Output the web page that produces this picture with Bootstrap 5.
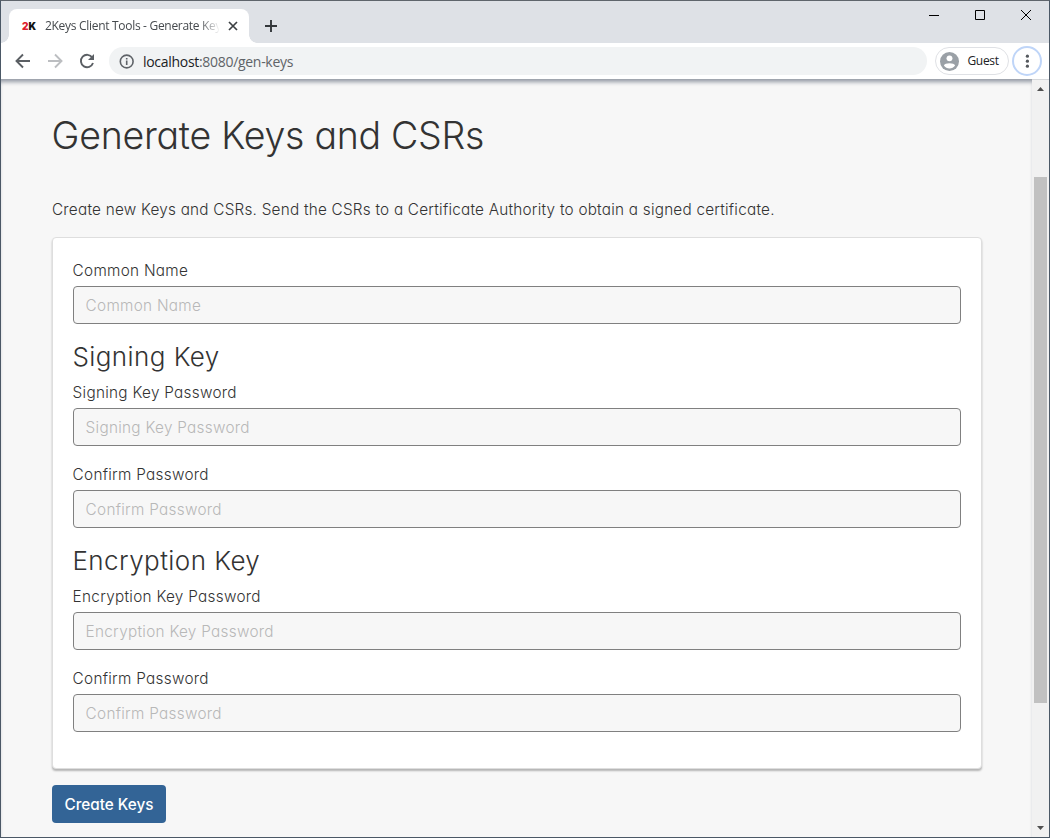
<!DOCTYPE html>
<html lang="en">
<head>
<meta charset="utf-8">
<title>2Keys Client Tools - Generate Keys</title>
<link href="https://cdn.jsdelivr.net/npm/bootstrap@5.3.0/dist/css/bootstrap.min.css" rel="stylesheet">
<style>
  body { background: #f7f7f7; color: #333; overflow: hidden; }
  .window { width: 1050px; height: 838px; border: 1px solid #4b5866; border-top-color: #5f656c; font-family: "Open Sans", sans-serif; }
  .tabstrip { height: 42px; background: #dee1e6; }
  .tab { position: relative; width: 240px; height: 34px; margin: 8px 0 0 8px; padding: 0 10px 0 13px; background: #fff; border-radius: 8px 8px 0 0; }
  .tab::before, .tab::after { content: ""; position: absolute; bottom: 0; width: 8px; height: 8px; }
  .tab::before { left: -8px; background: radial-gradient(circle at 0 0, transparent 7.5px, #fff 8px); }
  .tab::after { right: -8px; background: radial-gradient(circle at 100% 0, transparent 7.5px, #fff 8px); }
  .favicon { width: 15px; margin-right: 8px; font: 900 10px/12px Inter, sans-serif; letter-spacing: -.1px; color: #111; white-space: nowrap; }
  .favicon b { color: #e0202c; font-weight: 900; }
  .tab-title { width: 174px; font-size: 12px; line-height: 16px; letter-spacing: -.3px; color: #45494d; white-space: nowrap; overflow: hidden; -webkit-mask-image: linear-gradient(90deg, #000 154px, transparent 175px); mask-image: linear-gradient(90deg, #000 154px, transparent 175px); }
  .new-tab { margin: 18px 0 0 15px; }
  .toolbar { height: 36px; background: #fff; }
  .omnibox { width: 818px; height: 28px; margin-left: 12px; padding-left: 10px; border-radius: 14px; background: #f1f3f4; font-size: 14px; letter-spacing: -.3px; color: #5f6368; }
  .omnibox svg { margin-right: 9px; }
  .omnibox span { color: #202124; }
  .profile { width: 74px; height: 28px; margin-left: 8px; padding-left: 3.500px; border: 1px solid #dfe1e5; border-radius: 14px; font-size: 12px; letter-spacing: -.35px; color: #202124; }
  .profile svg { margin-right: 9px; }
  .menu-dot { width: 30px; height: 30px; margin-left: 3px; border: 2px solid #bfd5f8; border-radius: 50%; }
  .page { width: 1031px; padding: 32px 50px 0 51px; font-family: Inter, sans-serif; font-feature-settings: "cv11"; font-weight: 300; border-top: 1px solid #a0a5ae; box-shadow: inset 0 4px 4px -2px #9399a4; background: #f7f7f7; }
  .page h1 { font-size: 37.5px; line-height: 48px; font-weight: 300; margin: 0 0 38px -.4px; letter-spacing: -.27px; }
  .page p { font-size: 15.3px; line-height: 24px; margin-bottom: 15px; letter-spacing: .23px; }
  .key-card { height: 532px; padding: 21px 20px 20px; background: #fff; border: 1px solid #dedede; border-radius: 4px; box-shadow: 0 2px 2px rgba(0,0,0,.27); }
  .key-card h3 { font-size: 26px; line-height: 34px; font-weight: 300; margin: 0 0 7px -.6px; letter-spacing: .43px; }
  .key-card label { display: block; font-size: 15.3px; line-height: 24px; margin: 0 0 3px -.4px; letter-spacing: .29px; }
  .key-card .form-control { height: 38px; margin-bottom: 16px; padding: 6px 11.6px; background: #f7f7f7; border: 1px solid #808080; border-radius: 4px; font-size: 15.3px; font-weight: 300; letter-spacing: .29px; font-feature-settings: "cv11"; }
  .key-card .form-control + label { margin-top: 17px; }
  .key-card .form-control:has(+ label) { margin-bottom: 0; }
  .key-card .form-control::placeholder { color: #b8b8b8; }
  .create-btn { width: 114px; height: 38px; margin-top: 16px; padding: 2px 0 0; background: #336496; border: 0; border-radius: 4px; color: #fff; font-size: 15.3px; font-weight: 500; font-feature-settings: "cv11"; }
  .scrollbar { width: 17px; background: #f1f1f1; border-top: 1px solid #d5d7da; }
  .thumb { width: 13px; height: 526px; margin: 97px 2px 0; background: #c1c1c1; }
  .up { position: absolute; left: 1037px; top: 87px; }
  .down { position: absolute; left: 1037px; top: 826px; }
</style>
</head>
<body>
<div class="window d-flex flex-column overflow-hidden">
  <div class="tabstrip d-flex flex-shrink-0">
    <div class="tab d-flex align-items-center">
      <div class="favicon"><b>2</b>K</div>
      <div class="tab-title">2Keys Client Tools - Generate Keys</div>
      <svg class="ms-auto flex-shrink-0" width="12" height="12" viewBox="0 0 12 12"><path d="M2 2l8 8M10 2l-8 8" stroke="#3c4043" stroke-width="1.7"/></svg>
    </div>
    <svg class="new-tab" width="14" height="14" viewBox="0 0 14 14"><path d="M7 1v12M1 7h12" stroke="#33373a" stroke-width="1.9"/></svg>
    <svg class="ms-auto" width="130" height="30" viewBox="0 0 130 30" fill="none" stroke="#000"><path d="M10 14.500h10M56.500 9.500h9v9h-9zM102 9l10 10M112 9l-10 10"/></svg>
  </div>
  <div class="toolbar d-flex align-items-center flex-shrink-0">
    <svg width="96" height="36" viewBox="0 0 96 36" fill="none" stroke="#5b5f64" stroke-width="1.9"><path d="M29 18H16M22 11.500L15.500 18l6.500 6.500"/><path stroke="#bcbec1" d="M47 18h13M54 11.500l6.500 6.500-6.500 6.500"/><path d="M91.300 14.600A6.200 6.200 0 1 0 92 20"/><path d="M93 11v6h-6z" fill="#5b5f64" stroke="none"/></svg>
    <div class="omnibox d-flex align-items-center">
      <svg width="15" height="15" viewBox="0 0 15 15" fill="none" stroke="#5f6368" stroke-width="1.600"><circle cx="7.700" cy="7.500" r="6.400"/><path d="M7.700 6.600v4.300M7.700 3.900v1.500"/></svg>
      <div><span>localhost</span>:8080/gen-keys</div>
    </div>
    <div class="profile d-flex align-items-center">
      <svg width="19" height="19" viewBox="0 0 18 18"><circle cx="9" cy="9" r="9" fill="#9aa0a6"/><circle cx="9" cy="6" r="2.800" fill="#fff"/><path d="M3.700 12.800c.8-3 9.800-3 10.600 0a6.500 6.500 0 0 1-10.600 0z" fill="#fff"/></svg>
      <div>Guest</div>
    </div>
    <div class="menu-dot d-flex align-items-center justify-content-center">
      <svg width="4" height="14" viewBox="0 0 4 14" fill="#55595e"><circle cx="2.400" cy="2.200" r="1.600"/><circle cx="2.400" cy="7.200" r="1.600"/><circle cx="2.400" cy="12.200" r="1.600"/></svg>
    </div>
  </div>
  <div class="d-flex flex-fill">
    <main class="page">
      <h1>Generate Keys and CSRs</h1>
      <p>Create new Keys and CSRs. Send the CSRs to a Certificate Authority to obtain a signed certificate.</p>
      <form class="key-card">
        <label for="cn">Common Name</label>
        <input id="cn" class="form-control" placeholder="Common Name">
        <h3>Signing Key</h3>
        <label for="sp">Signing Key Password</label>
        <input id="sp" type="password" class="form-control" placeholder="Signing Key Password">
        <label for="sc">Confirm Password</label>
        <input id="sc" type="password" class="form-control" placeholder="Confirm Password">
        <h3>Encryption Key</h3>
        <label for="ep">Encryption Key Password</label>
        <input id="ep" type="password" class="form-control" placeholder="Encryption Key Password">
        <label for="ec">Confirm Password</label>
        <input id="ec" type="password" class="form-control" placeholder="Confirm Password">
      </form>
      <button class="btn create-btn" type="button">Create Keys</button>
    </main>
    <div class="scrollbar">
      <svg class="up" width="7" height="4" viewBox="0 0 7 4"><path d="M0 4L3.500 0 7 4z" fill="#505050"/></svg>
      <div class="thumb"></div>
      <svg class="down" width="7" height="4" viewBox="0 0 7 4"><path d="M0 0L3.500 4 7 0z" fill="#505050"/></svg>
    </div>
  </div>
</div>
<script src="https://cdn.jsdelivr.net/npm/bootstrap@5.3.0/dist/js/bootstrap.bundle.min.js"></script>
</body>
</html>
